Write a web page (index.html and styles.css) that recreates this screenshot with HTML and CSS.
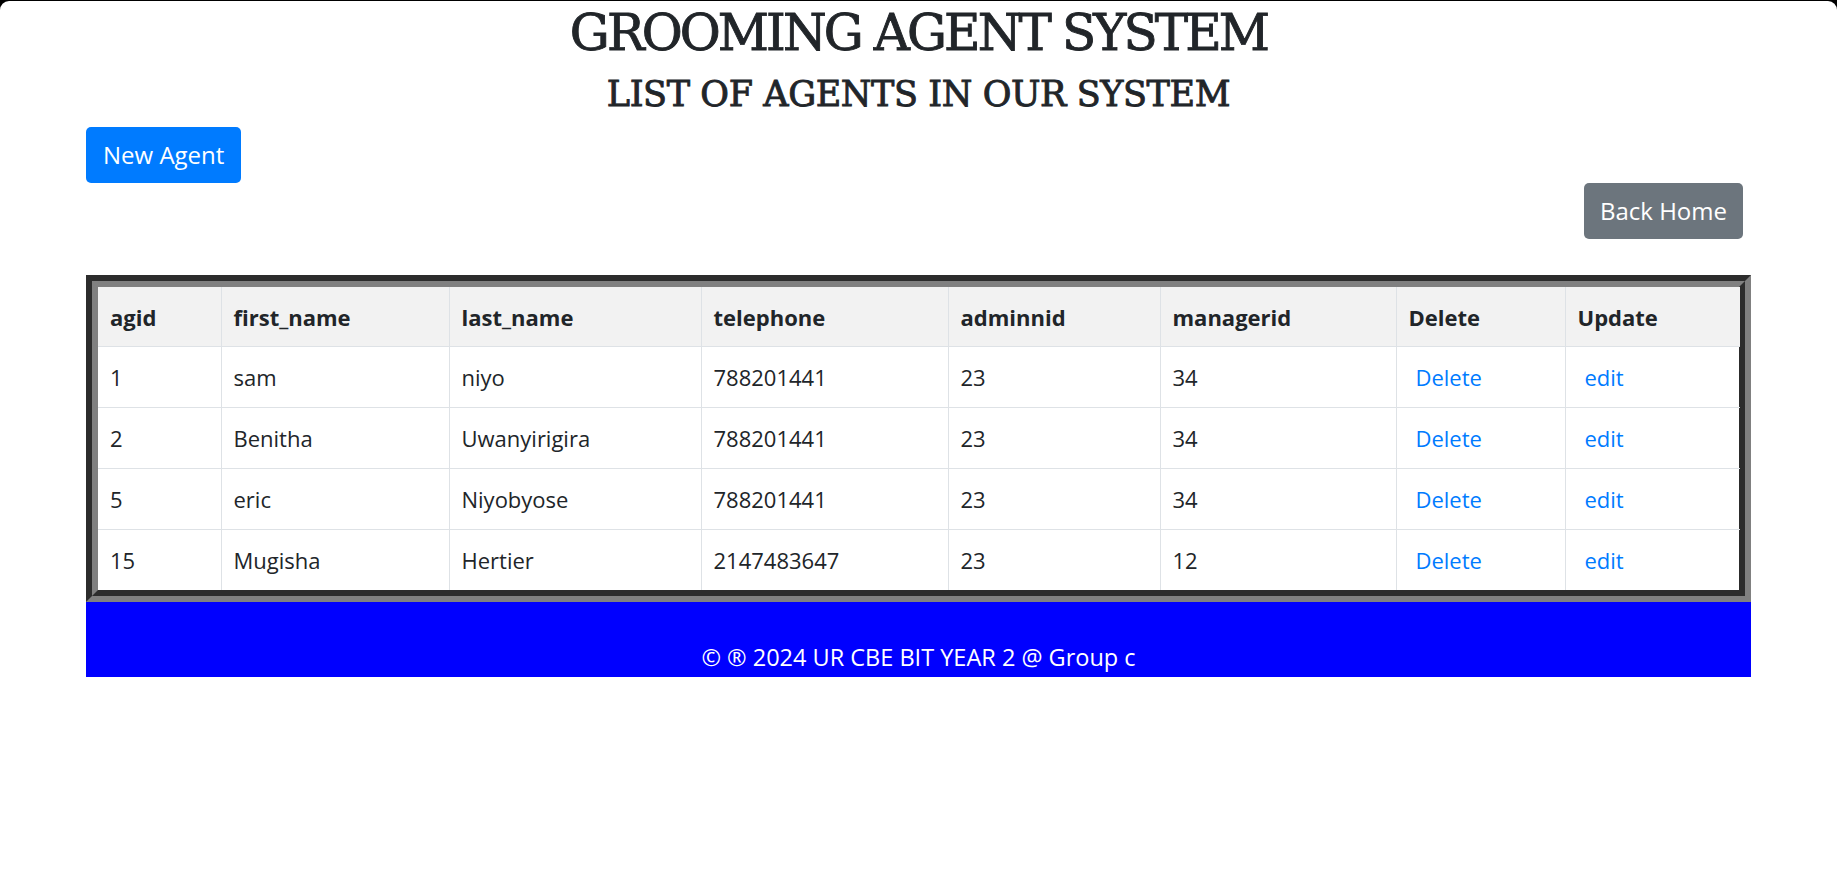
FILE: index.html
```html
<!DOCTYPE html>
<html lang="en">
<head>
<meta charset="utf-8">
<title>Grooming Agent System</title>
<link rel="stylesheet" href="styles.css">
</head>
<body>
<div class="window">
  <h1 class="title">GROOMING AGENT SYSTEM</h1>
  <h2 class="subtitle">LIST OF AGENTS IN OUR SYSTEM</h2>
  <div class="container">
    <div class="actions">
      <a class="btn btn-primary" href="#">New Agent</a>
    </div>
    <div class="actions actions-right">
      <a class="btn btn-secondary" href="#">Back Home</a>
    </div>
    <div class="table-frame">
      <table class="agents">
        <colgroup>
          <col class="c-agid">
          <col class="c-first">
          <col class="c-last">
          <col class="c-tel">
          <col class="c-admin">
          <col class="c-manager">
          <col class="c-delete">
          <col class="c-update">
        </colgroup>
        <thead>
          <tr>
            <th>agid</th>
            <th>first_name</th>
            <th>last_name</th>
            <th>telephone</th>
            <th>adminnid</th>
            <th>managerid</th>
            <th>Delete</th>
            <th>Update</th>
          </tr>
        </thead>
        <tbody>
          <tr>
            <td>1</td><td>sam</td><td>niyo</td><td>788201441</td><td>23</td><td>34</td>
            <td><a class="link" href="#">Delete</a></td><td><a class="link" href="#">edit</a></td>
          </tr>
          <tr>
            <td>2</td><td>Benitha</td><td>Uwanyirigira</td><td>788201441</td><td>23</td><td>34</td>
            <td><a class="link" href="#">Delete</a></td><td><a class="link" href="#">edit</a></td>
          </tr>
          <tr>
            <td>5</td><td>eric</td><td>Niyobyose</td><td>788201441</td><td>23</td><td>34</td>
            <td><a class="link" href="#">Delete</a></td><td><a class="link" href="#">edit</a></td>
          </tr>
          <tr>
            <td>15</td><td>Mugisha</td><td>Hertier</td><td>2147483647</td><td>23</td><td>12</td>
            <td><a class="link" href="#">Delete</a></td><td><a class="link" href="#">edit</a></td>
          </tr>
        </tbody>
      </table>
    </div>
    <footer class="footer">
      <p class="footer-text">&copy; &reg; 2024 UR CBE BIT YEAR 2 @ Group c</p>
    </footer>
  </div>
</div>
</body>
</html>
```

FILE: styles.css
```css
html {
  background: #000;
  height: 100%;
}

body {
  margin: 0;
  height: 100%;
  font-family: "Open Sans", "Noto Sans", sans-serif;
  color: #212529;
}

.window {
  box-sizing: border-box;
  margin-top: 1px;
  height: calc(100% - 1px);
  background: #fff;
  border-radius: 9px 9px 0 0;
  overflow: hidden;
  padding-top: 2px;
}

.title {
  margin: 0 0 10px;
  text-align: center;
  font-family: "DejaVu Serif", serif;
  font-weight: 400;
  font-size: 50px;
  line-height: 60px;
  letter-spacing: -2.9px;
  -webkit-text-stroke: 0.9px #212529;
}

.subtitle {
  margin: 0 0 12px;
  text-align: center;
  font-family: "DejaVu Serif", serif;
  font-weight: 400;
  font-size: 35px;
  line-height: 42px;
  letter-spacing: -0.4px;
  -webkit-text-stroke: 0.9px #212529;
}

.container {
  width: 1665px;
  margin: 0 auto;
}

.actions {
  display: flex;
}

.actions-right {
  justify-content: flex-end;
  padding-right: 8px;
  margin-bottom: 36px;
}

.btn {
  display: inline-block;
  box-sizing: border-box;
  height: 56px;
  padding: 11px 17px;
  font-size: 24px;
  line-height: 34px;
  color: #fff;
  text-decoration: none;
  border-radius: 5px;
}

.btn-primary {
  background: #007bff;
}

.btn-secondary {
  background: #6c757d;
  padding: 11px 16px;
}

.table-frame {
  border: 12px groove #808080;
}

.agents {
  width: 100%;
  table-layout: fixed;
  border-collapse: collapse;
  font-size: 22px;
  line-height: 30px;
}

.agents th,
.agents td {
  padding: 15px 10px 15px 12px;
  text-align: left;
  vertical-align: top;
  border: 1px solid #dee2e6;
  white-space: nowrap;
}

.agents th {
  background: #f2f2f2;
  font-weight: 700;
  padding-top: 15px;
  padding-bottom: 14px;
}

.agents tr > :first-child { border-left: 0; }
.agents tr > :last-child { border-right: 0; }
.agents thead th { border-top: 0; }
.agents tbody tr:last-child td { border-bottom: 0; }

.c-agid { width: 123px; }
.c-first { width: 228px; }
.c-last { width: 252px; }
.c-tel { width: 247px; }
.c-admin { width: 212px; }
.c-manager { width: 236px; }
.c-delete { width: 169px; }
.c-update { width: 175px; }

.link {
  margin-left: 7px;
  color: #007bff;
  text-decoration: none;
}

.footer {
  background: #0000ff;
  height: 75px;
  box-sizing: border-box;
  padding-top: 40px;
}

.footer-text {
  margin: 0;
  text-align: center;
  color: #fff;
  font-size: 23.5px;
  line-height: 30px;
}
```
